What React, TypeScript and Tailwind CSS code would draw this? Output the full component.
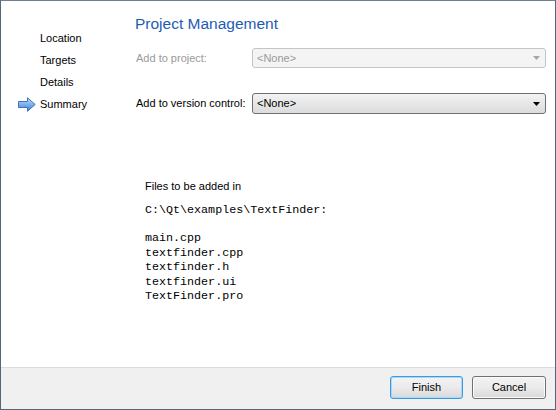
import React from "react";

const sans = { fontFamily: '"Liberation Sans", Arial, sans-serif' };

function ArrowIcon() {
  return (
    <svg width="18" height="15" viewBox="0 0 18 15">
      <defs>
        <linearGradient id="ag" x1="0" y1="0" x2="0" y2="1">
          <stop offset="0" stopColor="#c4ddf7" />
          <stop offset="0.5" stopColor="#7eb0ea" />
          <stop offset="1" stopColor="#3f7fd0" />
        </linearGradient>
      </defs>
      <path
        d="M0.5 4.5 H9.5 V0.8 L17.2 7.5 L9.5 14.2 V10.5 H0.5 Z"
        fill="url(#ag)"
        stroke="#3f74bd"
        strokeWidth="1"
        strokeLinejoin="round"
      />
    </svg>
  );
}

function Combo({ disabled, h }: { disabled?: boolean; h: string }) {
  return (
    <div
      className={
        "flex-1 flex items-center rounded-[3px] border pl-[4px] pr-[5px] " +
        h +
        (disabled
          ? " border-[#c3c6c9] bg-[#f4f4f4] text-[#9a9a9a]"
          : " border-[#707070] bg-gradient-to-b from-[#f3f3f3] to-[#dcdcdc] text-black")
      }
    >
      <span className="flex-1 text-[11px] leading-none">&lt;None&gt;</span>
      <svg width="7" height="4" viewBox="0 0 7 4">
        <path d="M0 0 H7 L3.5 4 Z" fill={disabled ? "#a6a6a6" : "#000"} />
      </svg>
    </div>
  );
}

function Button({ label, focused }: { label: string; focused?: boolean }) {
  return (
    <div
      className={
        "flex h-[23px] items-center justify-center rounded-[3px] border bg-gradient-to-b from-[#f3f3f3] via-[#ebebeb] to-[#d9d9d9] text-[11px] text-black " +
        (focused
          ? "w-[73px] border-[#3c9be0] shadow-[inset_0_0_0_1px_#a6d8f8]"
          : "w-[74px] border-[#707070] shadow-[inset_0_0_0_1px_#fbfbfb]")
      }
    >
      {label}
    </div>
  );
}

export default function App() {
  const files = ["main.cpp", "textfinder.cpp", "textfinder.h", "textfinder.ui", "TextFinder.pro"];
  return (
    <div
      className="flex h-[410px] w-[556px] flex-col border border-[#56677c] border-t-[#6f7e90] bg-white"
      style={sans}
    >
      <div className="flex flex-1">
        <div className="w-[134px] pt-[26px]">
          {["Location", "Targets", "Details", "Summary"].map((t) => (
            <div key={t} className="flex h-[22px] items-center text-[11px] text-black">
              <div className="flex w-[39px] justify-end pr-[4px]">
                {t === "Summary" ? <ArrowIcon /> : null}
              </div>
              <span>{t}</span>
            </div>
          ))}
        </div>
        <div className="flex flex-1 flex-col pr-[9px] pt-[13px]">
          <div className="h-[20px] text-[15.5px] leading-[20px] text-[#1d5cb4]">Project Management</div>
          <div className="mt-[14px] flex items-center">
            <div className="w-[117px] pl-[1px] text-[11px] text-[#9a9a9a]">Add to project:</div>
            <Combo disabled h="h-[20px]" />
          </div>
          <div className="mt-[25px] flex items-center">
            <div className="w-[117px] pl-[1px] text-[11px] text-black">Add to version control:</div>
            <Combo h="h-[21px]" />
          </div>
          <div className="ml-[10px] mt-[65px] h-[14px] text-[11px] leading-[14px] text-black">Files to be added in</div>
          <div
            className="ml-[10px] mt-[10px] text-[11.7px] leading-[14px] text-black"
            style={{ fontFamily: '"Liberation Mono", "Courier New", monospace' }}
          >
            C:\Qt\examples\TextFinder:
          </div>
          <div
            className="ml-[10px] mt-[14px] text-[11.7px] leading-[14.5px] text-black"
            style={{ fontFamily: '"Liberation Mono", "Courier New", monospace' }}
          >
            {files.map((f) => (
              <div key={f}>{f}</div>
            ))}
          </div>
        </div>
      </div>
      <div className="flex h-[42px] justify-end gap-[9px] border-t border-[#dcdcdc] bg-[#f0f0f0] pr-[9px] pt-[8px]">
        <Button label="Finish" focused />
        <Button label="Cancel" />
      </div>
    </div>
  );
}
